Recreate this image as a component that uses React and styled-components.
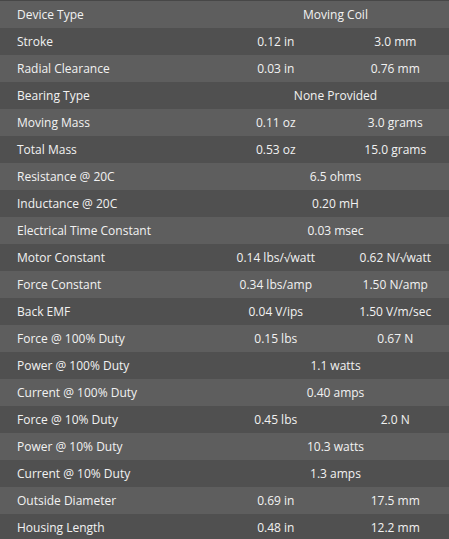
import React from "react";
import styled, { createGlobalStyle } from "styled-components";

const Global = createGlobalStyle`
  html, body { margin: 0; padding: 0; background: #505050; overflow: hidden; }
  body { font-family: "Open Sans", "Noto Sans", sans-serif; }
`;

const Table = styled.div`
  width: 455px;
  border-top: 1px solid #474747;
  display: flex;
  flex-direction: column;
`;

const Row = styled.div`
  display: grid;
  grid-template-columns: 216px 119.5px 119.5px;
  height: 27px;
  align-items: center;
  background: ${(p) => (p.$alt ? "#505050" : "#5e5e5e")};
  color: #f2f2f2;
  font-size: 12px;
  line-height: 27px;
`;

const Label = styled.div`
  padding-left: 17px;
  white-space: nowrap;
`;

const Value = styled.div`
  text-align: center;
  white-space: nowrap;
  grid-column: ${(p) => (p.$span ? "2 / span 2" : "auto")};
`;

const rows = [
  ["Device Type", "Moving Coil"],
  ["Stroke", "0.12 in", "3.0 mm"],
  ["Radial Clearance", "0.03 in", "0.76 mm"],
  ["Bearing Type", "None Provided"],
  ["Moving Mass", "0.11 oz", "3.0 grams"],
  ["Total Mass", "0.53 oz", "15.0 grams"],
  ["Resistance @ 20C", "6.5 ohms"],
  ["Inductance @ 20C", "0.20 mH"],
  ["Electrical Time Constant", "0.03 msec"],
  ["Motor Constant", "0.14 lbs/√watt", "0.62 N/√watt"],
  ["Force Constant", "0.34 lbs/amp", "1.50 N/amp"],
  ["Back EMF", "0.04 V/ips", "1.50 V/m/sec"],
  ["Force @ 100% Duty", "0.15 lbs", "0.67 N"],
  ["Power @ 100% Duty", "1.1 watts"],
  ["Current @ 100% Duty", "0.40 amps"],
  ["Force @ 10% Duty", "0.45 lbs", "2.0 N"],
  ["Power @ 10% Duty", "10.3 watts"],
  ["Current @ 10% Duty", "1.3 amps"],
  ["Outside Diameter", "0.69 in", "17.5 mm"],
  ["Housing Length", "0.48 in", "12.2 mm"],
];

export default function App() {
  return (
    <>
      <Global />
      <Table>
        {rows.map(([label, a, b], i) => (
          <Row key={label} $alt={i % 2 === 1}>
            <Label>{label}</Label>
            {b === undefined ? (
              <Value $span>{a}</Value>
            ) : (
              <>
                <Value>{a}</Value>
                <Value>{b}</Value>
              </>
            )}
          </Row>
        ))}
      </Table>
    </>
  );
}
